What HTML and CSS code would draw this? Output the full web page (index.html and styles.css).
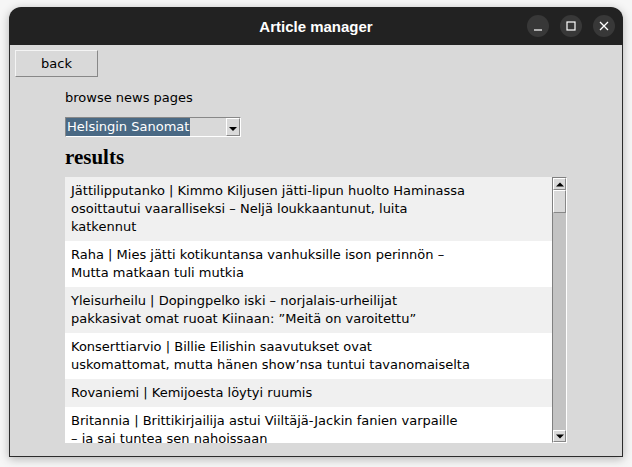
FILE: index.html
```html
<!DOCTYPE html>
<html>
<head>
<meta charset="utf-8">
<link rel="stylesheet" href="styles.css">
</head>
<body>
<div class="window">
  <div class="titlebar">
    <span class="title">Article manager</span>
    <div class="controls">
      <span class="ctl"><svg width="22" height="22" viewBox="0 0 22 22"><line x1="7" y1="15" x2="15" y2="15" stroke="#fff" stroke-width="1.2"/></svg></span>
      <span class="ctl"><svg width="22" height="22" viewBox="0 0 22 22"><rect x="7" y="7" width="8" height="8" fill="none" stroke="#fff" stroke-width="1.2"/></svg></span>
      <span class="ctl"><svg width="22" height="22" viewBox="0 0 22 22"><path d="M7 7 L15 15 M15 7 L7 15" stroke="#fff" stroke-width="1.3"/></svg></span>
    </div>
  </div>
  <div class="content">
    <div class="backbtn">back</div>
    <div class="label">browse news pages</div>
    <div class="combo">
      <span class="sel">Helsingin Sanomat</span>
      <span class="arrow"><svg width="8" height="5" viewBox="0 0 8 5"><path d="M0 0 L8 0 L4 4 Z" fill="#000"/></svg></span>
    </div>
    <div class="results">results</div>
    <div class="listwrap">
      <div class="list">
        <div class="row odd">Jättilipputanko | Kimmo Kiljusen jätti-lipun huolto Haminassa<br>osoittautui vaaralliseksi – Neljä loukkaantunut, luita<br>katkennut</div>
        <div class="row">Raha | Mies jätti kotikuntansa vanhuksille ison perinnön –<br>Mutta matkaan tuli mutkia</div>
        <div class="row odd">Yleisurheilu | Dopingpelko iski – norjalais-urheilijat<br>pakkasivat omat ruoat Kiinaan: ”Meitä on varoitettu”</div>
        <div class="row">Konserttiarvio | Billie Eilishin saavutukset ovat<br>uskomattomat, mutta hänen show’nsa tuntui tavanomaiselta</div>
        <div class="row odd">Rovaniemi | Kemijoesta löytyi ruumis</div>
        <div class="row">Britannia | Brittikirjailija astui Viiltäjä-Jackin fanien varpaille<br>– ja sai tuntea sen nahoissaan</div>
      </div>
      <div class="scrollbar">
        <div class="sbtn"><svg width="8" height="5" viewBox="0 0 8 5"><path d="M0 4.5 L8 4.5 L4 0.5 Z" fill="#000"/></svg></div>
        <div class="thumb"></div>
        <div class="trough"></div>
        <div class="sbtn"><svg width="8" height="5" viewBox="0 0 8 5"><path d="M0 0.5 L8 0.5 L4 4.5 Z" fill="#000"/></svg></div>
      </div>
    </div>
  </div>
</div>
</body>
</html>
```
FILE: styles.css
```css
html, body {
  margin: 0;
  padding: 0;
}
body {
  width: 632px;
  height: 467px;
  background: #f6f6f6;
  overflow: hidden;
  font-family: "DejaVu Sans", sans-serif;
  font-size: 13px;
  color: #000;
}
.window {
  margin: 7px 0 0 9px;
  width: 614px;
  height: 450px;
  display: flex;
  flex-direction: column;
  border-radius: 12px 12px 0 0;
  box-shadow: 0 2px 10px rgba(0,0,0,0.28);
}
.titlebar {
  height: 38px;
  flex: none;
  background: #222222;
  border-radius: 12px 12px 0 0;
  display: flex;
  align-items: center;
  justify-content: center;
  position: relative;
}
.title {
  color: #fff;
  font-family: "Liberation Sans", sans-serif;
  font-weight: bold;
  font-size: 15px;
  margin-top: 1px;
}
.controls {
  position: absolute;
  right: 8px;
  top: 8px;
  display: flex;
  gap: 11px;
}
.ctl {
  width: 22px;
  height: 22px;
  border-radius: 50%;
  background: #383838;
  display: block;
}
.ctl svg { display: block; }
.content {
  flex: 1;
  background: #d9d9d9;
  border: 1px solid #2c2c2c;
  border-top: none;
  display: flex;
  flex-direction: column;
  align-items: flex-start;
}
.backbtn {
  margin: 5px 0 0 5px;
  width: 81px;
  height: 25px;
  border: 1px solid;
  border-color: #f4f4f4 #888 #888 #f4f4f4;
  display: flex;
  align-items: center;
  justify-content: center;
  line-height: 16px;
}
.label {
  margin: 13px 0 0 55px;
  line-height: 16px;
}
.combo {
  margin: 11px 0 0 55px;
  width: 174px;
  height: 18px;
  border: 1px solid;
  border-color: #888 #fff #fff #888;
  display: flex;
  justify-content: space-between;
}
.sel {
  background: #4a6984;
  color: #fff;
  line-height: 18px;
  padding: 0 1px;
}
.arrow {
  width: 12px;
  height: 16px;
  border: 1px solid;
  border-color: #fff #888 #888 #fff;
  display: flex;
  align-items: flex-end;
  justify-content: center;
}
.arrow svg { margin-bottom: 3px; }
.results {
  margin: 8px 0 0 55px;
  font-family: "Liberation Serif", serif;
  font-weight: bold;
  font-size: 21px;
  line-height: 24px;
}
.listwrap {
  margin: 8px 0 0 55px;
  display: flex;
  height: 266px;
}
.list {
  width: 487px;
  background: #fff;
  overflow: hidden;
}
.row {
  padding: 5px 6px;
  line-height: 18px;
  background: #fff;
}
.row.odd { background: #f0f0f0; }
.scrollbar {
  width: 13px;
  border: 1px solid;
  border-color: #808080 #fff #fff #808080;
  background: #c3c3c3;
  display: flex;
  flex-direction: column;
}
.sbtn {
  height: 10px;
  flex: none;
  background: #d9d9d9;
  border: 1px solid;
  border-color: #fff #888 #888 #fff;
  display: flex;
  align-items: center;
  justify-content: center;
}
.thumb {
  height: 21px;
  flex: none;
  background: #d9d9d9;
  border: 1px solid;
  border-color: #fff #888 #888 #fff;
}
.trough { flex: 1; }
```
